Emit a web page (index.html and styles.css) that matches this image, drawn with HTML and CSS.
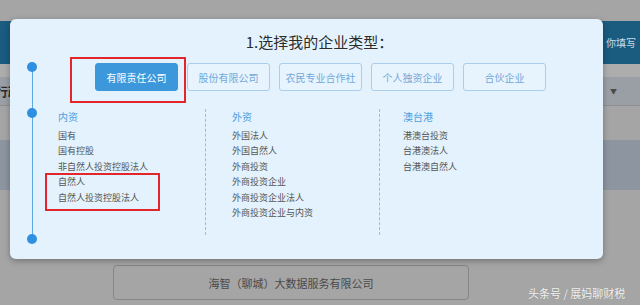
FILE: index.html
```html
<!DOCTYPE html>
<html>
  <head>
    <title>选择企业类型</title>
    <meta name="viewport" content="width=device-width, initial-scale=1.0" />
    <link rel="stylesheet" href="styles.css">
  </head>
  <body>
    <!-- dimmed page behind the dialog -->
    <div class="page">
      <div class="top-gap"></div>
      <div class="header"><span class="header-hint">你填写</span></div>
      <div class="sub-strip"></div>
      <div class="filter-bar">
        <span class="filter-label">行政区</span>
        <span class="filter-caret">&#9660;</span>
      </div>
      <div class="gap"></div>
      <div class="panel"></div>
      <div class="company-row">
        <div class="company-btn">海智（聊城）大数据服务有限公司</div>
      </div>
    </div>

    <div class="modal">
      <h3 class="modal-title">1.选择我的企业类型：</h3>

      <div class="modal-body">
        <div class="rail">
          <span class="dot"></span>
          <span class="rail-space"></span>
          <span class="dot"></span>
          <span class="rail-fill"></span>
          <span class="dot"></span>
        </div>

        <div class="content">
          <div class="type-row">
            <button class="type-btn active">有限责任公司</button>
            <button class="type-btn">股份有限公司</button>
            <button class="type-btn">农民专业合作社</button>
            <button class="type-btn">个人独资企业</button>
            <button class="type-btn">合伙企业</button>
          </div>

          <div class="lists">
            <div class="list-col">
              <div class="list-head">内资</div>
              <div class="list-item">国有</div>
              <div class="list-item">国有控股</div>
              <div class="list-item">非自然人投资控股法人</div>
              <div class="list-item">自然人</div>
              <div class="list-item">自然人投资控股法人</div>
            </div>
            <div class="list-col foreign">
              <div class="list-head">外资</div>
              <div class="list-item">外国法人</div>
              <div class="list-item">外国自然人</div>
              <div class="list-item">外商投资</div>
              <div class="list-item">外商投资企业</div>
              <div class="list-item">外商投资企业法人</div>
              <div class="list-item">外商投资企业与内资</div>
            </div>
            <div class="list-col hkmt">
              <div class="list-head">澳台港</div>
              <div class="list-item">港澳台投资</div>
              <div class="list-item">台港澳法人</div>
              <div class="list-item">台港澳自然人</div>
            </div>
          </div>
        </div>
      </div>

      <!-- red annotation boxes -->
      <div class="mark mark-type"></div>
      <div class="mark mark-list"></div>
    </div>

    <div class="watermark">头条号 / 展妈聊财税</div>
  </body>
</html>
```

FILE: styles.css
```css
* {
  box-sizing: border-box;
}

body {
  margin: 0;
  width: 640px;
  height: 305px;
  overflow: hidden;
  position: relative;
  background: #a5a5a5;
  font-family: "Noto Sans CJK SC", "Liberation Sans", sans-serif;
  color: #555;
}

/* background page */
.top-gap {
  height: 21px;
}

.header {
  height: 43px;
  background: #1a5b80;
  display: flex;
  align-items: center;
  overflow: hidden;
}

.header-hint {
  margin-left: 606px;
  font-size: 10px;
  color: #c9dbe6;
  white-space: nowrap;
}

.sub-strip {
  height: 13px;
  background: #adadad;
}

.filter-bar {
  height: 29px;
  background: #9a9fa5;
  display: flex;
  align-items: center;
  justify-content: space-between;
  border-bottom: 1px solid #8e8e8e;
}

.filter-label {
  margin-left: -4px;
  font-size: 12px;
  font-weight: 700;
  color: #2a2a2a;
}

.filter-caret {
  margin-right: 23px;
  font-size: 7px;
  color: #4a4a4a;
}

.gap {
  height: 34px;
}

.panel {
  height: 50px;
  background: #8c95a0;
}

.company-row {
  margin-top: 75px;
  padding-left: 113px;
}

.company-btn {
  width: 356px;
  height: 35px;
  border: 1px solid #868686;
  border-radius: 4px;
  display: flex;
  align-items: center;
  justify-content: center;
  font-size: 11px;
  color: #4a4a4a;
}

/* dialog */
.modal {
  position: absolute;
  left: 10px;
  top: 19px;
  width: 593px;
  height: 240px;
  background: #e3f2fc;
  border-radius: 6px;
  box-shadow: 0 2px 6px rgba(0, 0, 0, 0.3);
  padding: 13px 0 15px 0;
  display: flex;
  flex-direction: column;
}

.modal-title {
  margin: 0;
  padding-left: 26px;
  text-align: center;
  font-size: 15px;
  line-height: 20px;
  font-weight: 400;
  color: #2c2c2c;
}

.modal-body {
  margin-top: 10px;
  flex: 1;
  display: flex;
}

.rail {
  width: 44px;
  position: relative;
  display: flex;
  flex-direction: column;
  align-items: center;
}

.rail::before {
  content: "";
  position: absolute;
  left: 21.5px;
  top: 5px;
  bottom: 5px;
  width: 1px;
  background: #5ea8e2;
}

.dot {
  width: 10px;
  height: 10px;
  border-radius: 50%;
  background: #2f8fe0;
  position: relative;
}

.rail-space {
  height: 36px;
}

.rail-fill {
  flex: 1;
}

.content {
  flex: 1;
}

.type-row {
  margin-top: 1px;
  padding-left: 41px;
  display: flex;
  gap: 9px;
}

.type-btn {
  width: 83px;
  height: 28px;
  padding: 0;
  border: 1px solid #a9cdea;
  border-radius: 3px;
  background: #e8f4fd;
  font-family: inherit;
  font-size: 10px;
  color: #6fa8da;
}

.type-btn.active {
  background: #3d98db;
  border-color: #3d98db;
  color: #fff;
}

.lists {
  margin-top: 18px;
  padding-left: 4px;
  display: flex;
  height: 126px;
}

.list-col {
  width: 147px;
}

.list-col.foreign {
  width: 174px;
  padding-left: 26px;
  border-left: 1px dashed #98bcd9;
}

.list-col.hkmt {
  padding-left: 23px;
  border-left: 1px dashed #98bcd9;
}

.list-head {
  font-size: 10px;
  line-height: 16px;
  color: #4d9ee0;
  margin-bottom: 2.5px;
}

.list-item {
  font-size: 9px;
  line-height: 15.5px;
  color: #555;
  white-space: nowrap;
}

.mark {
  position: absolute;
  border: 2px solid #e3262d;
}

.mark-type {
  left: 60px;
  top: 38px;
  width: 116px;
  height: 46px;
}

.mark-list {
  left: 35px;
  top: 154px;
  width: 115px;
  height: 38px;
}

.watermark {
  position: absolute;
  left: 528px;
  top: 285px;
  font-size: 11px;
  line-height: 16px;
  color: #f2f2f2;
  text-shadow: 0 0 1px rgba(0, 0, 0, 0.2);
  white-space: nowrap;
}
```
